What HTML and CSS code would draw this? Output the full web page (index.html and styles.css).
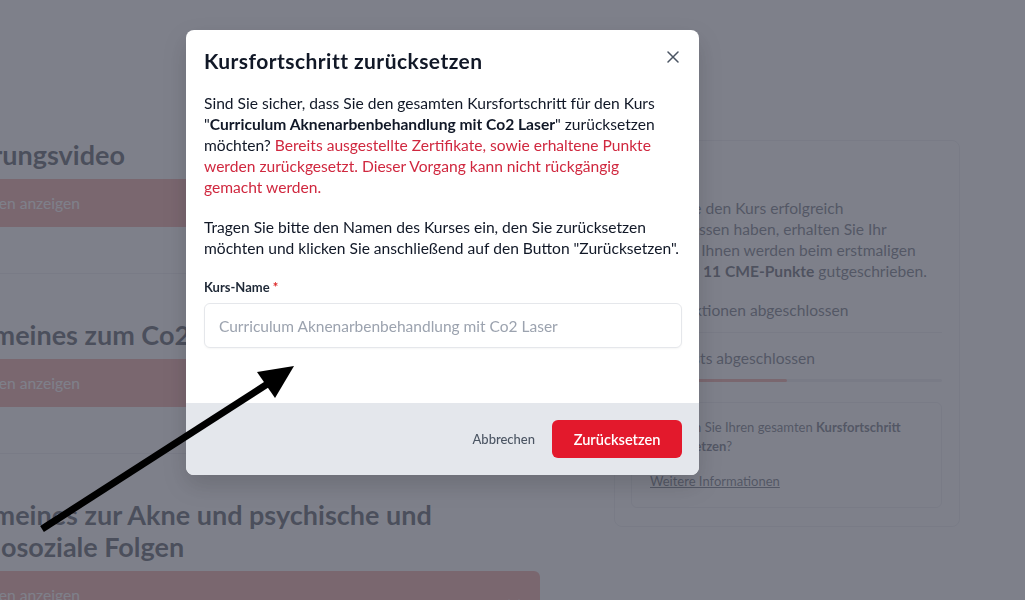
FILE: index.html
```html
<!DOCTYPE html>
<html lang="de">
<head>
<meta charset="utf-8">
<title>Kursfortschritt zurücksetzen</title>
<link rel="stylesheet" href="styles.css">
</head>
<body>
<div class="page">
  <main class="lessons">
    <section class="section first">
      <h2 class="section-title">Erklärungsvideo</h2>
      <div class="bar"><span>Lektionen anzeigen</span></div>
    </section>
    <section class="section">
      <h2 class="section-title">Allgemeines zum Co2 Laser</h2>
      <div class="bar"><span>Lektionen anzeigen</span></div>
    </section>
    <section class="section">
      <h2 class="section-title">Allgemeines zur Akne und psychische und<br>psychosoziale Folgen</h2>
      <div class="bar rounded"><span>Lektionen anzeigen</span>
        <svg class="chev" width="12" height="8" viewBox="0 0 12 8"><path d="M1 1.5l5 5 5-5" fill="none" stroke="#fff" stroke-width="1.8" stroke-linecap="round" stroke-linejoin="round"/></svg>
      </div>
    </section>
  </main>
  <aside class="card">
    <h3 class="card-title">Status</h3>
    <p class="card-text">Sobald Sie den Kurs erfolgreich<br>abgeschlossen haben, erhalten Sie Ihr<br>Zertifikat. Ihnen werden beim erstmaligen<br>Abschluss <b>11 CME-Punkte</b> gutgeschrieben.</p>
    <div class="stat">12/12 Lektionen abgeschlossen</div>
    <div class="divider"></div>
    <div class="stat">10/12 Tests abgeschlossen</div>
    <div class="progress"><div class="progress-fill"></div></div>
    <div class="reset-box">
      <p>Möchten Sie Ihren gesamten <b>Kursfortschritt</b><br><b>zurücksetzen</b>?</p>
      <a class="more" href="#">Weitere Informationen</a>
    </div>
  </aside>
</div>

<div class="overlay">
  <div class="modal">
    <div class="modal-head">
      <h1 class="modal-title">Kursfortschritt zurücksetzen</h1>
      <button class="close" aria-label="Schließen">
        <svg width="12" height="12" viewBox="0 0 12 12"><path d="M1 1l10 10M11 1L1 11" stroke="#4b5563" stroke-width="1.5" stroke-linecap="round"/></svg>
      </button>
    </div>
    <div class="modal-body">
      <p>Sind Sie sicher, dass Sie den gesamten Kursfortschritt für den Kurs<br>"<b>Curriculum Aknenarbenbehandlung mit Co2 Laser</b>" zurücksetzen<br>möchten? <span class="warn">Bereits ausgestellte Zertifikate, sowie erhaltene Punkte<br>werden zurückgesetzt. Dieser Vorgang kann nicht rückgängig<br>gemacht werden.</span></p>
      <p class="p2">Tragen Sie bitte den Namen des Kurses ein, den Sie zurücksetzen<br>möchten und klicken Sie anschließend auf den Button "Zurücksetzen".</p>
      <label class="label" for="kurs">Kurs-Name <span class="req">*</span></label>
      <input id="kurs" class="input" type="text" placeholder="Curriculum Aknenarbenbehandlung mit Co2 Laser">
    </div>
    <div class="modal-foot">
      <button class="cancel">Abbrechen</button>
      <button class="danger">Zurücksetzen</button>
    </div>
  </div>
</div>

<svg class="arrow" width="1025" height="600" viewBox="0 0 1025 600">
  <line x1="42" y1="529" x2="272" y2="381" stroke="#000" stroke-width="7"/>
  <polygon points="294,366 257,372 275,398" fill="#000"/>
</svg>
</body>
</html>
```
FILE: styles.css
```css
html, body {
  margin: 0;
  padding: 0;
  height: 100%;
  overflow: hidden;
}
body {
  font-family: Lato, "Noto Sans", "Liberation Sans", sans-serif;
  background: #ffffff;
  color: #111827;
}
.page {
  display: flex;
  align-items: flex-start;
  gap: 74px;
}
.lessons {
  width: 608px;
  margin-left: -68px;
  flex: none;
}
.section {
  padding: 45px 0 46px;
  border-bottom: 1px solid #e5e7eb;
}
.section.first {
  padding-top: 139px;
}
.section-title {
  margin: 0 0 8px;
  font-size: 27px;
  line-height: 32px;
  font-weight: 700;
  color: #111827;
}
.bar {
  height: 48px;
  background: #ec8880;
  display: flex;
  align-items: center;
  justify-content: space-between;
  padding: 0 20px 0 16px;
  box-sizing: border-box;
  font-size: 15.6px;
  color: #ffffff;
}
.bar.rounded {
  border-radius: 6px;
}
.chev { margin-top: 16px; }

.card {
  margin-top: 140px;
  width: 346px;
  box-sizing: border-box;
  border: 1px solid #e5e7eb;
  border-radius: 8px;
  padding: 16px 17px 18px 16px;
  flex: none;
  color: #374151;
}
.card-title {
  margin: 0;
  font-size: 20px;
  line-height: 28px;
  font-weight: 700;
  color: #111827;
}
.card-text {
  margin: 13px 0 0;
  font-size: 15.6px;
  line-height: 21px;
  white-space: nowrap;
}
.card-text b { color: #1f2937; }
.stat {
  margin-top: 18px;
  font-size: 15.6px;
  line-height: 21px;
}
.divider {
  margin-top: 11px;
  border-top: 1px solid #e5e7eb;
}
.divider + .stat { margin-top: 15px; }
.progress {
  margin-top: 10px;
  height: 3px;
  background: #e5e7eb;
  border-radius: 2px;
}
.progress-fill {
  width: 50%;
  height: 100%;
  background: #ec8880;
  border-radius: 2px;
}
.reset-box {
  margin-top: 20px;
  border: 1px solid #e5e7eb;
  border-radius: 6px;
  padding: 15px 18px 16px;
  font-size: 13px;
  line-height: 19px;
}
.reset-box p { margin: 0; }
.more {
  display: inline-block;
  margin-top: 16px;
  color: #374151;
  text-decoration: underline;
}

.overlay {
  position: fixed;
  inset: 0;
  background: rgba(91, 94, 107, 0.79);
  padding: 30px 0 0 186px;
}
.modal {
  width: 513px;
  background: #ffffff;
  border-radius: 8px;
  overflow: hidden;
  box-shadow: 0 10px 25px rgba(0, 0, 0, 0.15);
}
.modal-head {
  display: flex;
  justify-content: space-between;
  align-items: flex-start;
  padding: 17px 20px 0 18px;
}
.modal-title {
  margin: 0;
  font-size: 21px;
  line-height: 28px;
  letter-spacing: 0.45px;
  font-weight: 700;
  color: #111827;
}
.close {
  border: 0;
  background: none;
  padding: 0;
  margin-top: 4px;
  width: 12px;
  height: 12px;
  display: flex;
}
.modal-body {
  padding: 18px 17px 55px 18px;
}
.modal-body p {
  margin: 0;
  font-size: 15.6px;
  line-height: 21px;
  color: #111827;
  white-space: nowrap;
}
.modal-body b { font-weight: 700; }
.warn { color: #d0283f; }
.modal-body .p2 { margin-top: 19px; }
.label {
  display: block;
  margin-top: 19px;
  font-size: 13px;
  line-height: 18px;
  font-weight: 700;
  color: #1f2937;
}
.req { color: #dc2626; }
.input {
  display: block;
  margin-top: 7px;
  width: 100%;
  height: 45px;
  box-sizing: border-box;
  border: 1px solid #e5e7eb;
  border-radius: 6px;
  padding: 0 14px;
  font-family: inherit;
  font-size: 15.5px;
  color: #111827;
  box-shadow: 0 1px 2px rgba(0, 0, 0, 0.04);
}
.input::placeholder { color: #9ca3af; }
.modal-foot {
  background: #e4e7ec;
  padding: 17px 17px;
  display: flex;
  justify-content: flex-end;
  align-items: center;
  gap: 17px;
}
.cancel {
  border: 0;
  background: none;
  padding: 0;
  font-family: inherit;
  font-size: 13px;
  font-weight: 500;
  color: #4b5563;
}
.danger {
  border: 0;
  height: 38px;
  width: 130px;
  border-radius: 6px;
  background: #e3192c;
  color: #ffffff;
  font-family: inherit;
  font-size: 14.6px;
  font-weight: 600;
}
.arrow {
  position: fixed;
  left: 0;
  top: 0;
  pointer-events: none;
}
```
